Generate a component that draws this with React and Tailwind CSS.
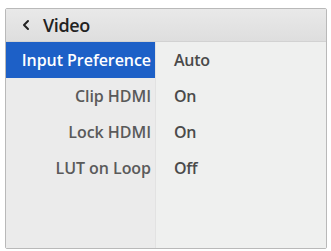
import React from 'react';
import { ChevronLeft } from 'lucide-react';

const rows = [
  { label: 'Input Preference', value: 'Auto', active: true },
  { label: 'Clip HDMI', value: 'On' },
  { label: 'Lock HDMI', value: 'On' },
  { label: 'LUT on Loop', value: 'Off' },
];

export default function App() {
  return (
    <div className="w-[331px] h-[251px] bg-white pt-[8px] pl-[5px]" style={{ fontFamily: '"Open Sans", "Liberation Sans", sans-serif' }}>
      <div className="w-[322px] h-[241px] border border-[#b9b9b9] rounded-[2px] flex flex-col overflow-hidden">
        <div className="h-[33px] flex items-center pl-[12px] gap-[9px] bg-gradient-to-b from-[#e9e9e9] to-[#dedede] border-b border-[#d2d2d2]">
          <ChevronLeft className="w-[16px] h-[16px] text-[#222]" strokeWidth={3} />
          <span className="text-[18px] font-semibold text-[#222] tracking-[-0.4px]">Video</span>
        </div>
        <div className="flex flex-1">
          <div className="w-[150px] bg-[#ebebeb] border-r border-[#e2e2e2] flex flex-col">
            {rows.map((r) => (
              <div
                key={r.label}
                className={`h-[36px] flex items-center justify-end pr-[4px] text-[16px] font-semibold tracking-[-0.05px] ${
                  r.active ? 'bg-[#1d60c7] text-white' : 'text-[#5a5a5a]'
                }`}
              >
                {r.label}
              </div>
            ))}
          </div>
          <div className="flex-1 bg-[#eff0ef] flex flex-col">
            {rows.map((r) => (
              <div key={r.label} className="h-[36px] flex items-center pl-[18px] text-[16px] font-semibold text-[#4a4a4a] tracking-[-0.3px]">
                {r.value}
              </div>
            ))}
          </div>
        </div>
      </div>
    </div>
  );
}
